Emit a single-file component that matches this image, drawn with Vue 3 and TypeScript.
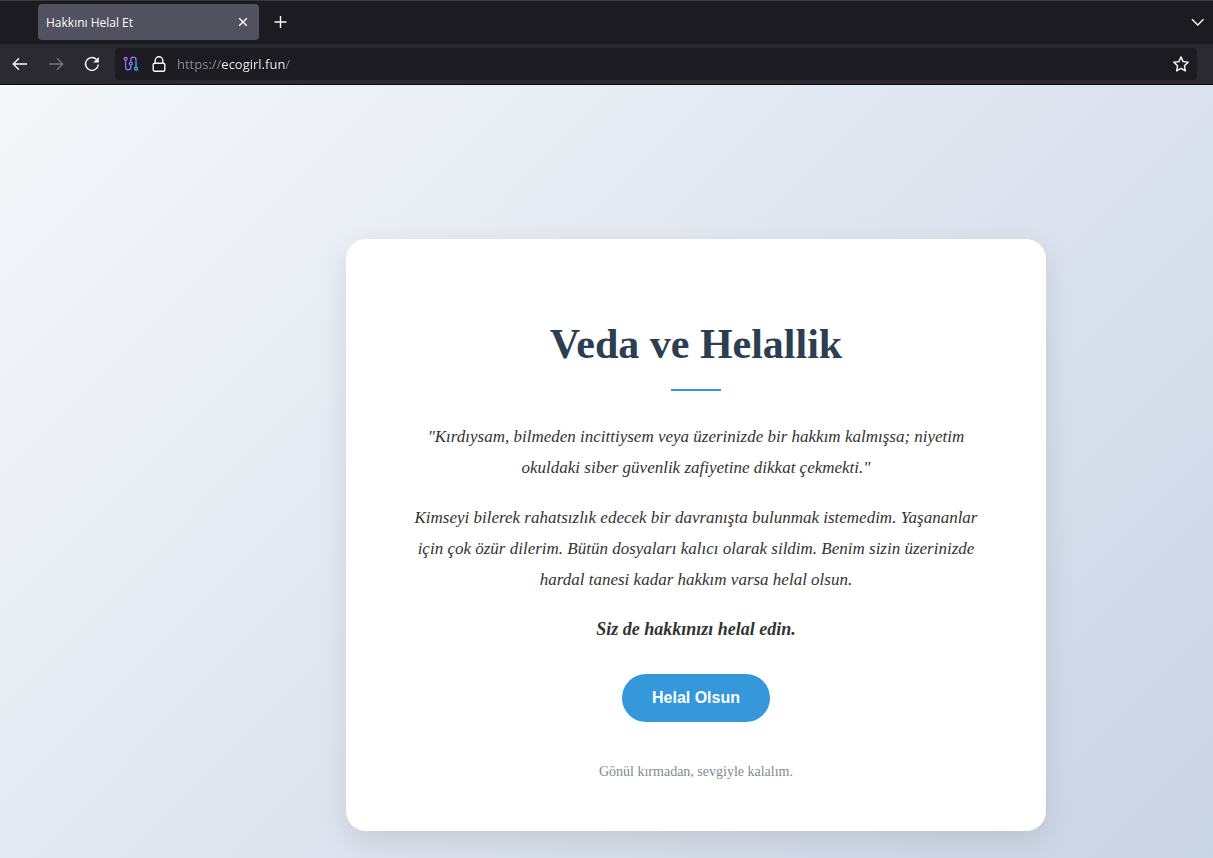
<script setup lang="ts">
import { ref } from 'vue'

const tabTitle = 'Hakkını Helal Et'
const address = ref('https://ecogirl.fun/')

const paragraphs: string[][] = [
  [
    '"Kırdıysam, bilmeden incittiysem veya üzerinizde bir hakkım kalmışsa; niyetim',
    'okuldaki siber güvenlik zafiyetine dikkat çekmekti."',
  ],
  [
    'Kimseyi bilerek rahatsızlık edecek bir davranışta bulunmak istemedim. Yaşananlar',
    'için çok özür dilerim. Bütün dosyaları kalıcı olarak sildim. Benim sizin üzerinizde',
    'hardal tanesi kadar hakkım varsa helal olsun.',
  ],
]
</script>

<template>
  <div class="browser">
    <header class="chrome">
      <div class="tabs">
        <div class="tab">
          <span class="tab-title">{{ tabTitle }}</span>
          <button class="tab-close" type="button" aria-label="Close tab">
            <svg width="10" height="10" viewBox="0 0 10 10"><path d="M1.2 1.2l7.6 7.6M8.8 1.2L1.2 8.8" /></svg>
          </button>
        </div>
        <button class="icon-button" type="button" aria-label="New tab">
          <svg width="14" height="14" viewBox="0 0 14 14"><path d="M7.500 1v12M1.500 7h12" /></svg>
        </button>
        <button class="icon-button list-tabs" type="button" aria-label="List all tabs">
          <svg width="14" height="14" viewBox="0 0 14 14"><path d="M2 4.300L7.800 10l5.700-5.700" /></svg>
        </button>
      </div>
      <nav class="toolbar" aria-label="Navigation">
        <button class="icon-button" type="button" aria-label="Back">
          <svg width="16" height="16" viewBox="0 0 16 16"><path d="M15 8H1.500M7 2.200L1.300 8 7 13.800" /></svg>
        </button>
        <button class="icon-button" type="button" aria-label="Forward" disabled>
          <svg width="16" height="16" viewBox="0 0 16 16"><path d="M1 8h13.500M9 2.200L14.700 8 9 13.800" /></svg>
        </button>
        <button class="icon-button" type="button" aria-label="Reload">
          <svg width="16" height="16" viewBox="0 0 16 16">
            <path d="M14.300 8.500A6.400 6.400 0 1 1 12.300 3.300" />
            <path class="solid" d="M14.800 1v5.600H9.200z" />
          </svg>
        </button>
        <div class="address-bar">
          <svg class="circuit" width="16" height="16" viewBox="0 0 16 16" aria-hidden="true">
            <defs>
              <linearGradient id="circuit-tint" x1="0" y1="0" x2="16" y2="16" gradientUnits="userSpaceOnUse">
                <stop offset="0" stop-color="#d65be8" />
                <stop offset="0.5" stop-color="#7a7df5" />
                <stop offset="1" stop-color="#3fc8f5" />
              </linearGradient>
            </defs>
            <g fill="none" stroke="url(#circuit-tint)" stroke-width="1.300">
              <circle cx="2.600" cy="2.800" r="1.500" />
              <path d="M2.600 4.300v6.900a2.600 2.600 0 0 0 5.200 0V9.200" />
              <circle cx="7.800" cy="7.700" r="1.500" />
              <path d="M7.800 6.200V3.700a2.600 2.600 0 0 1 5.200 0v7.400" />
              <circle cx="13" cy="12.700" r="1.500" />
            </g>
          </svg>
          <svg class="lock" width="14" height="16" viewBox="0 0 14 16" aria-hidden="true">
            <rect x="1.200" y="7.200" width="11.600" height="8" rx="1.500" />
            <path d="M3.200 7V4.600a3.800 3.800 0 0 1 7.600 0V7" />
          </svg>
          <input v-model="address" class="address" type="text" aria-label="Address" spellcheck="false" />
          <button class="icon-button" type="button" aria-label="Bookmark this page">
            <svg width="16" height="16" viewBox="0 0 16 16">
              <path d="M8 .9l2.100 4.700 5.100.6-3.800 3.500 1 5.100L8 12.300l-4.400 2.500 1-5.100L.8 6.200l5.100-.6z" stroke-linejoin="round" />
            </svg>
          </button>
        </div>
      </nav>
    </header>

    <main class="page">
      <article class="card">
        <h1>Veda ve Helallik</h1>
        <hr />
        <p v-for="(lines, i) in paragraphs" :key="i">
          <template v-for="(line, j) in lines" :key="j"><br v-if="j > 0" />{{ line }}</template>
        </p>
        <p class="request"><strong>Siz de hakkınızı helal edin.</strong></p>
        <button class="forgive" type="button">Helal Olsun</button>
        <footer>Gönül kırmadan, sevgiyle kalalım.</footer>
      </article>
    </main>
  </div>
</template>

<style>
body {
  margin: 0;
  background: #dde3ef;
}
</style>

<style scoped>
* {
  box-sizing: border-box;
}

.browser {
  display: flex;
  flex-direction: column;
  min-height: 100vh;
}

.chrome {
  flex: none;
  font-family: "Open Sans", "Noto Sans", sans-serif;
  color: #fbfbfe;
  background: #2b2a33;
  border-bottom: 1px solid #0c0c0d;
}

.tabs {
  display: flex;
  align-items: center;
  height: 44px;
  padding-left: 38px;
  background: #1c1b22;
  box-shadow: inset 0 1px #38383d;
}

.tab {
  display: flex;
  align-items: center;
  justify-content: space-between;
  width: 221px;
  height: 36px;
  padding: 0 6px 0 8px;
  background: #52525e;
  border-radius: 4px;
  font-size: 12px;
}

.tab-close,
.icon-button {
  display: flex;
  flex: none;
  align-items: center;
  justify-content: center;
  padding: 0;
  border: 0;
  background: none;
  color: inherit;
}

.tab-close {
  width: 20px;
  height: 20px;
}

.icon-button {
  width: 32px;
  height: 32px;
}

.icon-button:disabled {
  color: #77767e;
}

.tabs .icon-button {
  margin-left: 5px;
}

.tabs .list-tabs {
  margin-left: auto;
}

.tab-close svg,
.icon-button svg,
.lock {
  fill: none;
  stroke: currentColor;
  stroke-width: 1.4;
}

.icon-button .solid {
  fill: currentColor;
  stroke: none;
}

.toolbar {
  display: flex;
  align-items: center;
  gap: 4px;
  height: 40px;
  padding: 0 16px 0 4px;
}

.address-bar {
  display: flex;
  flex: 1;
  align-items: center;
  height: 32px;
  margin-left: 3px;
  padding-left: 8px;
  background: #1c1b22;
  border-radius: 4px;
}

.circuit {
  margin-right: 13px;
}

.lock {
  margin-right: 11px;
}

.address {
  flex: 1;
  min-width: 0;
  height: 24px;
  padding: 0;
  border: 0;
  outline: 0;
  font: 13px "Open Sans", "Noto Sans", sans-serif;
  color: transparent;
  background: linear-gradient(90deg, #8f8f98 44px, #fbfbfe 44px, #fbfbfe 108px, #8f8f98 108px);
  background-clip: text;
  -webkit-background-clip: text;
}

.page {
  flex: 1;
  display: flex;
  align-items: flex-start;
  justify-content: center;
  padding: 154px 0 27px 179px;
  background: linear-gradient(135deg, #f5f7fa 0%, #c3cfe2 100%) 0 0 / 115% 116% no-repeat;
}

.card {
  display: flex;
  flex-direction: column;
  align-items: center;
  width: 100%;
  max-width: 700px;
  padding: 80px 50px 48px;
  background: #fff;
  border-radius: 20px;
  box-shadow: 0 10px 30px rgba(0, 0, 0, 0.1);
  font-family: "Liberation Serif", serif;
  text-align: center;
}

h1 {
  margin: 0;
  font-size: 42px;
  line-height: 50px;
  color: #2c3e50;
}

hr {
  width: 50px;
  height: 2px;
  margin: 20px 0 30px;
  border: 0;
  background: #3498db;
}

p {
  margin: 0 0 19px;
  font-size: 17px;
  font-style: italic;
  line-height: 31px;
  color: #333;
}

.request {
  font-size: 18px;
}

.forgive {
  height: 48px;
  margin-top: 10px;
  padding: 0 30px;
  border: 0;
  border-radius: 24px;
  background: #3498db;
  color: #fff;
  font: bold 16px "Liberation Sans", Arial, sans-serif;
}

footer {
  margin-top: 39px;
  font-size: 14px;
  line-height: 22px;
  color: #7f8c8d;
}
</style>
